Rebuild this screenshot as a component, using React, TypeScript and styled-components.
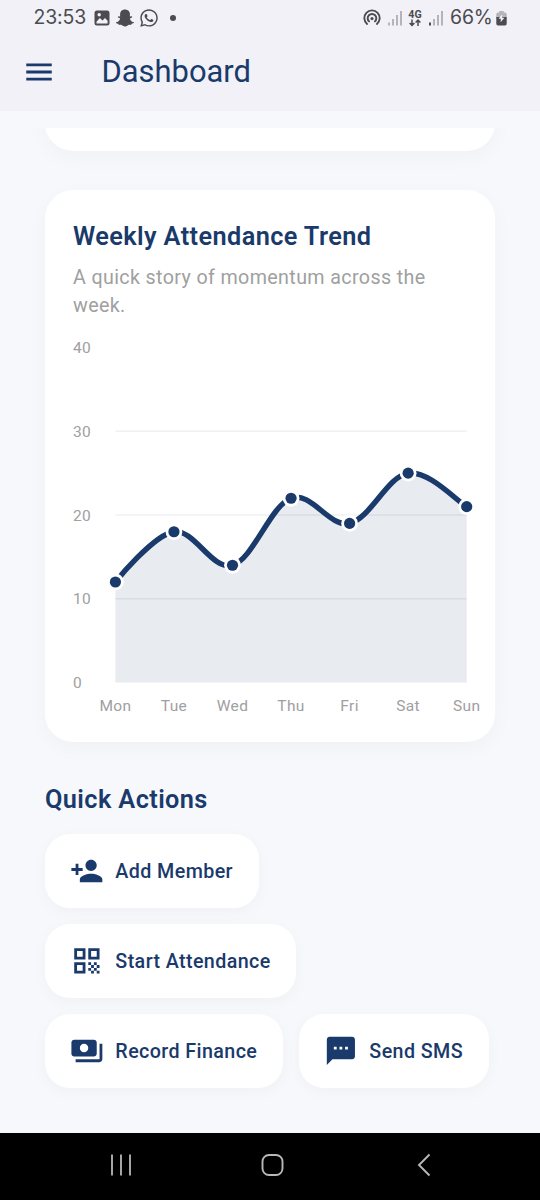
import React from "react";
import styled, { createGlobalStyle } from "styled-components";
import { MdPersonAdd, MdQrCode, MdPayments, MdSms, MdMenu } from "react-icons/md";
import { FaSnapchatGhost, FaWhatsapp } from "react-icons/fa";

const NAVY = "#1a3a6b";
const GREY = "#a0a0a0";

const GlobalStyle = createGlobalStyle`
  *, *::before, *::after { box-sizing: border-box; }
  body { margin: 0; font-family: Roboto, "Liberation Sans", sans-serif; background: #f6f8fc; }
  svg { display: block; flex: none; }
`;

const Screen = styled.div`
  display: flex;
  flex-direction: column;
  width: 540px;
  height: 1200px;
  overflow: hidden;
  background: #f6f8fc;
`;

const Header = styled.header`
  flex: none;
  height: 110.5px;
  background: #f1f1f7;
`;

const StatusBar = styled.div`
  display: flex;
  justify-content: space-between;
  align-items: center;
  height: 35px;
  padding: 0 33px 0 33.5px;
  color: #4b4b50;
`;

const StatusGroup = styled.div<{ $gap: number }>`
  display: flex;
  align-items: center;
  gap: ${(p) => p.$gap}px;
`;

const StatusText = styled.span<{ $width: number }>`
  width: ${(p) => p.$width}px;
  font-family: Inter, Roboto, sans-serif;
  font-size: 19.4px;
  line-height: 35px;
  white-space: nowrap;
  letter-spacing: -0.1px;
`;

const Dot = styled.span`
  width: 6px;
  height: 6px;
  margin-left: 5px;
  border-radius: 50%;
  background: currentColor;
`;

const TitleBar = styled.div`
  display: flex;
  align-items: center;
  gap: 45.5px;
  height: 73px;
  padding-left: 22px;
  color: ${NAVY};
`;

const PageTitle = styled.h1`
  margin: 0;
  font-size: 30.9px;
  font-weight: 400;
  line-height: 40px;
  letter-spacing: 0;
`;

const Viewport = styled.main`
  display: flex;
  flex-direction: column;
  flex: 1;
  min-height: 0;
  margin-top: 17px;
  padding: 0 45px;
  overflow: hidden;
`;

const Card = styled.section`
  flex: none;
  border-radius: 28px;
  background: #fff;
  box-shadow: 0 6px 22px rgba(20, 20, 40, 0.03);
`;

const PreviousCard = styled(Card)`
  height: 84px;
  margin-top: -60.5px;
`;

const TrendCard = styled(Card)`
  height: 551.5px;
  margin-top: 39px;
  padding: 30px 0 0 28px;
`;

const Heading = styled.h2`
  margin: 0;
  color: ${NAVY};
  font-size: 25.3px;
  font-weight: 600;
  line-height: 34px;
  letter-spacing: 0.4px;
`;

const Subtitle = styled.p`
  width: 380px;
  margin: 10px 0 0;
  color: ${GREY};
  font-size: 19.7px;
  line-height: 28.1px;
  letter-spacing: 0.36px;
`;

const Chart = styled.svg`
  margin-top: 17.5px;
  font-size: 15.5px;
  letter-spacing: 0.35px;
`;

const ActionsHeading = styled(Heading)`
  margin-top: 41.5px;
`;

const Actions = styled.div`
  display: flex;
  flex-wrap: wrap;
  gap: 16.5px 16px;
  margin-top: 17px;
`;

const ActionButton = styled.button<{ $width: number }>`
  display: flex;
  align-items: center;
  gap: 11.3px;
  width: ${(p) => p.$width}px;
  height: 73.5px;
  padding: 0 0 0 25.3px;
  border: 0;
  border-radius: 25px;
  background: #fff;
  box-shadow: 0 4px 16px rgba(20, 20, 40, 0.03);
  color: ${NAVY};
  font-family: inherit;
  font-size: 19.7px;
  font-weight: 500;
  letter-spacing: 0.4px;
  white-space: nowrap;
`;

const ActionLabel = styled.span`
  padding-top: 2px;
`;

const NavBar = styled.nav`
  display: flex;
  flex: none;
  align-items: center;
  justify-content: space-between;
  height: 67.5px;
  padding: 0 103.5px 2px 109px;
  background: #000;
`;

const days = ["Mon", "Tue", "Wed", "Thu", "Fri", "Sat", "Sun"];
const values = [12, 18, 14, 22, 19, 25, 21];
const LEFT = 42.4;
const STEP = 58.55;
const BASE = 344.5;
const yFor = (v: number) => BASE - v * 8.375;
const points = values.map((v, i) => ({ x: LEFT + i * STEP, y: yFor(v) }));

function smoothPath(smoothness: number) {
  let d = `M${points[0].x} ${points[0].y}`;
  let tx = 0;
  let ty = 0;
  for (let i = 1; i < points.length; i++) {
    const prev = points[i - 1];
    const cur = points[i];
    const next = points[i + 1] ?? cur;
    const c1 = [prev.x + tx, prev.y + ty];
    tx = ((next.x - prev.x) / 2) * smoothness;
    ty = ((next.y - prev.y) / 2) * smoothness;
    d += ` C${c1[0]} ${c1[1]} ${cur.x - tx} ${cur.y - ty} ${cur.x} ${cur.y}`;
  }
  return d;
}

function TrendChart() {
  const line = smoothPath(0.35);
  const right = points[6].x;
  return (
    <Chart width="420" height="384" viewBox="0 0 420 384">
      {[10, 20, 30].map((v) => (
        <line key={v} x1={LEFT} x2={right} y1={yFor(v)} y2={yFor(v)} stroke="#eff0f2" strokeWidth="1.6" />
      ))}
      <path d={`${line} L${right} ${BASE} L${LEFT} ${BASE} Z`} fill={NAVY} fillOpacity="0.1" />
      <path d={line} fill="none" stroke={NAVY} strokeWidth="5.4" strokeLinecap="butt" />
      {points.map((p, i) => (
        <g key={i}>
          <circle cx={p.x} cy={p.y} r="8.4" fill="#fff" />
          <circle cx={p.x} cy={p.y} r="5.6" fill={NAVY} />
        </g>
      ))}
      {[0, 10, 20, 30, 40].map((v) => (
        <text key={v} x="0" y={yFor(v) + 5.5} fill={GREY}>{v}</text>
      ))}
      {days.map((day, i) => (
        <text key={day} x={points[i].x} y="373" textAnchor="middle" fill={GREY}>{day}</text>
      ))}
    </Chart>
  );
}

const PictureIcon = () => (
  <svg width="16" height="16" viewBox="0 0 16 16">
    <rect x=".5" y=".5" width="15" height="15" rx="2.5" fill="currentColor" />
    <path d="M2.5 11.8 5.8 8l2.7 2.6L11 8l2.6 2.8v2.6H2.5z" fill="#f1f1f7" />
    <circle cx="5.2" cy="4.7" r="1.7" fill="#f1f1f7" />
  </svg>
);

const HotspotIcon = () => (
  <svg width="18" height="18" viewBox="0 0 18 18" fill="none" stroke="currentColor" strokeWidth="1.9" strokeLinecap="round">
    <path d="M4.1 15A7.7 7.7 0 1 1 13.9 15" />
    <path d="M6.1 12.4a4.300 4.300 0 1 1 5.800 0" />
    <circle cx="9" cy="9.600" r="1.600" fill="currentColor" stroke="none" />
  </svg>
);

const SignalIcon = ({ active }: { active?: boolean }) => (
  <svg width="14" height="16" viewBox="0 0 14 16" fill="#b4b4ba">
    <rect x="0" y="12.5" width="2" height="3" fill={active ? "#4b4b50" : undefined} />
    <rect x="4" y="9" width="2" height="6.5" />
    <rect x="8" y="5" width="2" height="10.5" />
    <rect x="12" y="1" width="2" height="14.5" />
  </svg>
);

const NetworkIcon = () => (
  <svg width="14" height="18" viewBox="0 0 14 18">
    <text x="7" y="8.6" textAnchor="middle" fontSize="10.6" fontWeight="700" fill="currentColor">4G</text>
    <path d="M4 10.5v5.800M1.600 14 4 16.400 6.400 14M10 17v-5.800M7.600 13.500 10 11.100l2.400 2.400" fill="none" stroke="currentColor" strokeWidth="1.500" />
  </svg>
);

const BatteryIcon = () => (
  <svg width="11" height="16" viewBox="0 0 11 16">
    <path d="M3.3 1h4.4v1.5H9A1.7 1.7 0 0 1 10.7 4v4H.3V4A1.7 1.7 0 0 1 2 2.5h1.3z" fill="#b4b4ba" />
    <path d="M.3 7h10.4v6.7A1.7 1.7 0 0 1 9 15.4H2a1.7 1.7 0 0 1-1.7-1.7z" fill="currentColor" />
    <path d="M6.3 4.3 2.5 8.8h2.4L4.6 12.2 8.5 7.7H6z" fill="#f1f1f7" />
  </svg>
);

const actions = [
  { label: "Add Member", Icon: MdPersonAdd, width: 213.5 },
  { label: "Start Attendance", Icon: MdQrCode, width: 251 },
  { label: "Record Finance", Icon: MdPayments, width: 238 },
  { label: "Send SMS", Icon: MdSms, width: 190 },
];

export default function App() {
  return (
    <Screen>
      <GlobalStyle />
      <Header>
        <StatusBar>
          <StatusGroup $gap={5.5}>
            <StatusText $width={55}>23:53</StatusText>
            <PictureIcon />
            <FaSnapchatGhost size={18} />
            <FaWhatsapp size={20} />
            <Dot />
          </StatusGroup>
          <StatusGroup $gap={6.8}>
            <HotspotIcon />
            <SignalIcon />
            <NetworkIcon />
            <SignalIcon active />
            <StatusGroup $gap={2}>
              <StatusText $width={44}>66%</StatusText>
              <BatteryIcon />
            </StatusGroup>
          </StatusGroup>
        </StatusBar>
        <TitleBar>
          <MdMenu size={34} />
          <PageTitle>Dashboard</PageTitle>
        </TitleBar>
      </Header>
      <Viewport>
        <PreviousCard />
        <TrendCard>
          <Heading>Weekly Attendance Trend</Heading>
          <Subtitle>A quick story of momentum across the week.</Subtitle>
          <TrendChart />
        </TrendCard>
        <ActionsHeading>Quick Actions</ActionsHeading>
        <Actions>
          {actions.map(({ label, Icon, width }) => (
            <ActionButton key={label} $width={width}>
              <Icon size={33.75} />
              <ActionLabel>{label}</ActionLabel>
            </ActionButton>
          ))}
        </Actions>
      </Viewport>
      <NavBar>
        <svg width="24" height="24" viewBox="0 0 24 24" stroke="#b8b8b8" strokeWidth="1.8">
          <path d="M3 1.5v21M12 1.5v21M21 1.5v21" />
        </svg>
        <svg width="24" height="24" viewBox="0 0 24 24" fill="none" stroke="#b8b8b8" strokeWidth="1.9">
          <rect x="1.5" y="2" width="20" height="20" rx="6.5" />
        </svg>
        <svg width="24" height="24" viewBox="0 0 24 24" fill="none" stroke="#b8b8b8" strokeWidth="1.9">
          <path d="M16.5 1.5 6 12l10.5 10.5" />
        </svg>
      </NavBar>
    </Screen>
  );
}
